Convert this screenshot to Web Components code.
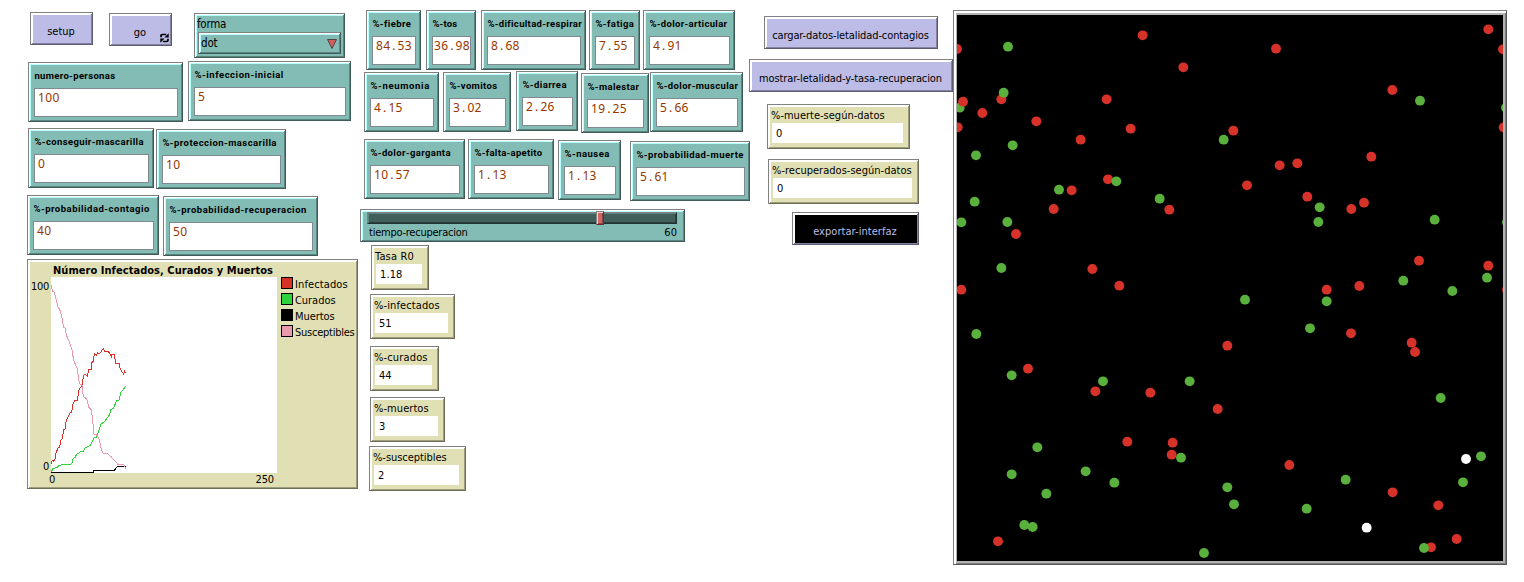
<!DOCTYPE html>
<html lang="es">
<head>
<meta charset="utf-8">
<title>Interfaz</title>
<style>
body{margin:0;background:#fff;width:1524px;height:582px;overflow:hidden}
</style>
</head>
<body>
<sim-interface></sim-interface>
<script>
const UI = '"DejaVu Sans Condensed","DejaVu Sans",sans-serif';
function define(name, render, after) {
  customElements.define(name, class extends HTMLElement {
    connectedCallback() {
      if (this.shadowRoot) return;
      const a = k => this.getAttribute(k) || '';
      const root = this.attachShadow({mode: 'open'});
      const t = document.createElement('template');
      t.innerHTML = render(a);
      root.append(t.content.cloneNode(true));
      if (after) after(this, root, a);
    }
  });
}
/* Widget box: size and the bevel shared by all widgets. */
const frame = (a, h, bg, inner, d1, d2, hl) => `
:host{display:block;flex:none;box-sizing:border-box;width:${a('w')}px;height:${h}px;margin:${a('dy') || 0}px 0 0 ${a('dx') || 0}px;
background:${bg};border:1px solid;border-color:#808080 ${d2} ${d2} #808080;
box-shadow:inset 1px 1px #fff,inset -1px -1px ${d1},inset 2px 2px ${hl};color:#000;font:11px/14px ${UI}}`;

/* Text whose letter spacing is adjusted to a given width. */
define('fit-text', () => `<style>:host{display:inline-block;white-space:pre}</style><span><slot></slot></span>`,
  (el, root, a) => {
    const s = root.querySelector('span');
    const target = parseFloat(a('w')) + 1, n = el.textContent.length;
    const natural = s.getBoundingClientRect().width;
    el.style.letterSpacing = ((target - natural) / n).toFixed(3) + 'px';
  });

define('sim-button', a => `<style>
${frame(a, 33, a('dark') ? '#000' : '#bcbce6', '', '#8383a1', '#5c5c71', '#fff')}
:host{display:flex;align-items:center;justify-content:center;position:relative;padding:7px 1px 0 0;${a('dark') ? 'color:#bcbce6' : ''}}
svg{position:absolute;right:2px;bottom:2px}
</style><fit-text w="${a('tw')}">${a('label')}</fit-text>
${a('forever') ? `<svg width="9" height="10" viewBox="0 0 9 10" fill="none" stroke="#000" stroke-width="1.7"><path d="M1 4.2V2.8Q1 1.5 2.3 1.5H6.2"/><path d="M8 5.8V7.2Q8 8.5 6.7 8.5H2.8"/><path d="M8.7 .3V4.6H4.4ZM.3 9.7V5.4H4.6Z" fill="#000" stroke="none"/></svg>` : ''}`);

define('sim-input', a => `<style>
${frame(a, 60, '#82bcb5', '', '#5b837f', '#405c59', '#baffff')}
:host{padding:7px 4px 0 5px}
.l{font:bold 9.5px/12px Roboto,sans-serif;height:12px;padding-left:.4px;white-space:nowrap}
.b{box-sizing:border-box;height:29px;margin-top:6px;border:1px solid #808890;background:#fff;color:#963700;
font:12px/16px "Noto Sans",sans-serif;padding:1px 0 0 ${a('shift') || 3}px;white-space:nowrap;overflow:hidden;letter-spacing:.34px}
.p{display:inline-block;width:7.2px;text-align:center}
</style><div class="l"><fit-text w="${a('tw')}">${a('label')}</fit-text></div>
<div class="b">${a('value').replace('.', '<span class="p">.</span>')}</div>`);

define('sim-monitor', a => `<style>
${frame(a, 45, '#e0e0b4', '', '#9d9d7e', '#6e6e58', '#fff')}
:host{padding:4px 6px 0 4px}
.l{height:14px}.l fit-text{margin-left:-1px}.b{height:20px;background:#fff;padding:4px 0 0 4px;box-sizing:border-box}
</style><div class="l"><fit-text w="${a('tw')}">${a('label')}</fit-text></div>
<div class="b"><fit-text w="${a('vw')}">${a('value')}</fit-text></div>`);

define('sim-chooser', a => `<style>
${frame(a, 45, '#82bcb5', '', '#5b837f', '#405c59', '#baffff')}
:host{padding:3px 3px 0;font:11.5px/15px ${UI}}
.l{height:15px}.l fit-text{margin-left:-1px}
.b{height:22px;box-sizing:border-box;border:1px solid;border-color:#808080 #405c59 #405c59 #808080;box-shadow:inset 1px 1px #fff,inset -1px -1px #5b837f,inset 2px 2px #baffff;
display:flex;justify-content:space-between;align-items:center;padding:0 3px 0 2px}
svg{margin-top:1px}
</style><div class="l"><fit-text w="28">${a('label')}</fit-text></div>
<div class="b"><fit-text w="15.5">${a('value')}</fit-text><svg width="10" height="10"><path d="M.5 .5H9.5L5 9.5Z" fill="#d0605c" stroke="#54413f"/></svg></div>`);

define('sim-slider', a => `<style>
${frame(a, 33, '#82bcb5', '', '#5b837f', '#405c59', '#baffff')}
:host{padding:2px 7px 0 6px;font:11px/15px ${UI}}
.t{height:12px;box-sizing:border-box;background:#41605c;border:1px solid;border-color:#808080 #203230 #203230 #808080;box-shadow:inset 1px 1px #5b837f,inset -1px -1px #2c403e;position:relative}
.k{position:absolute;left:228px;top:-2px;width:8px;height:14px;box-sizing:border-box;background:#cc6663;border:1px solid;border-color:#808080 #642f2e #642f2e #808080;box-shadow:inset 1px 1px #ffcfcc,inset -1px -1px #8e4745}
.l{display:flex;justify-content:space-between;padding:1px 0 0 2px}
</style><div class="t"><div class="k"></div></div>
<div class="l"><fit-text w="97.5">${a('label')}</fit-text><fit-text w="11.7">${a('value')}</fit-text></div>`);

const curves = {
  '#000': 'M93 652H219V646H283L292 634H318',
  '#2dd23c': 'M94 652L98 641L112 637L117 632L129 628H152L158 622V613L166 606L170 598L180 592L183 588H190L194 580L202 576L212 571L216 560L224 546H230L237 526L243 507L254 500L262 488L268 480L273 463L281 459L290 436H297L303 412L309 405L317 393',
  '#d83228': 'M93 628L97 616L100 620L105 612L108 595L114 578H118L123 556L127 550L131 525L137 520V503L144 486L150 474L155 471L160 443L166 435L172 436L178 400L187 393L190 362L195 358L202 364L206 343H215V322L220 320L223 295L229 300L233 294L240 295L250 280L255 290L263 289L268 293L275 306L276 298H283L287 324H297V334L305 349L311 357L314 349L317 355',
  '#e899ac': 'M93 91L98 109L103 112L108 133L114 156L119 163L125 184L131 218H135L139 240L147 258L156 285L161 317L171 338L178 385L186 391L190 425L200 431L206 456L214 464L218 495L222 537L232 541L239 557L244 584L250 595H262L272 604L284 617L294 628H311L317 641'
};
define('sim-plot', a => `<style>
${frame(a, 230, '#e0e0b4', '', '#9d9d7e', '#6e6e58', '#fff')}
:host{font-size:11px;padding:2px 0 0 2px}
.title{font:bold 11px/17px ${UI};height:15px;padding-left:23px}
.main{display:grid;grid-template-columns:21px 226px auto;column-gap:0}
.y{display:flex;flex-direction:column;justify-content:space-between;align-items:flex-end;padding:3px 2px 0 0;height:197px;margin-bottom:-1px;box-sizing:border-box;line-height:14px}
svg{display:block;background:#fff}
.leg{padding-left:4px}
.i{height:16px;display:flex;align-items:flex-start;gap:2px;line-height:14px}
.i i{width:10px;height:10px;border:1px solid #000;flex:none}
.i fit-text{padding-top:1px}
.x{display:flex;justify-content:space-between;padding:0 3px 0 19px;width:225px}
</style>
<div class="title"><fit-text w="219">${a('label')}</fit-text></div>
<div class="main"><div class="y"><fit-text w="17">100</fit-text><fit-text w="5">0</fit-text></div>
<svg width="226" height="196" viewBox="93 66 678 588">${Object.entries(curves).map(([c, d]) => `<path d="${d}" fill="none" stroke="${c}" stroke-width="3" shape-rendering="crispEdges"/>`).join('')}</svg>
<div class="leg">${[['#d83228', 'Infectados', 51.7], ['#2dd23c', 'Curados', 39.5], ['#000', 'Muertos', 38.5], ['#e899ac', 'Susceptibles', 58.5]].map(([c, t, w]) => `<div class="i"><i style="background:${c}"></i><fit-text w="${w}">${t}</fit-text></div>`).join('')}</div></div>
<div class="x"><fit-text w="5">0</fit-text><fit-text w="17.5">250</fit-text></div>`);

/* Agents, by quarter of the world: [dx, dy, colour, x y pairs] */
const R = '#d7322a', G = '#59b03c';
const agents = [
[0,0,G,'29 307'],
[0,0,R,'578 90 700 186 21 131 154 282 39 289 97 323 470 282 259 348 542 370 392 403 23 366 850 376 474 522 365 555 311 611 658 613 198 686 427 791 508 841 34 853'],
[0,0,G,'174 124 161 262 821 403 188 420 78 450 499 528 327 553 629 580 74 589 34 651 172 650 154 788'],
[840,0,R,'775 72 138 130 819 132 487 254 821 366 149 480 202 474 424 454 51 540 232 574 364 611 402 592 567 766 775 781 388 842 290 853 831 853'],
[840,0,G,'570 286 828 307 269 606 265 650 614 643 831 651 520 826 771 817 667 857'],
[0,840,R,'832 181 234 250 436 318 601 322 803 371 532 469 668 472 665 508 144 768'],
[0,840,G,'79 146 185 270 459 288 719 288 262 486 185 567 407 558 493 592 289 625 223 719 248 725 693 517 832 606 852 657 762 803'],
[840,840,R,'363 144 545 172 555 200 178 539 488 621 625 660 680 761 603 786'],
[840,840,G,'45 43 290 48 240 129 632 338 753 513 347 583 699 591 230 670 582 788'],
[840,840,'#fff','708 521 410 727']];
define('sim-world', () => `<style>
:host{display:block;flex:none;box-sizing:border-box;width:554px;height:555px;background:#b2b2b2;border:1px solid;border-color:#808080 #575757 #575757 #808080;box-shadow:inset 2px 2px #fff,inset -1px -1px #7d7d7d;padding:4px 0 0 3px}
svg{display:block;background:#000}
</style><svg width="546" height="546" viewBox="21 30 1638 1638">${agents.map(([dx, dy, c, p]) => `<g fill="${c}" transform="translate(${dx} ${dy + 1})">${p.match(/\d+ \d+/g).map(q => { const [x, y] = q.split(' '); return `<circle cx="${x}" cy="${y}" r="14.8"/>`; }).join('')}</g>`).join('')}</svg>`);

define('sim-row', a => `<style>:host{display:flex;align-items:flex-start;margin-top:${a('top') || 0}px}</style><slot></slot>`);
define('sim-column', a => `<style>:host{display:block;flex:none;width:${a('w')}px;padding-top:${a('top')}px}</style><slot></slot>`);

define('sim-interface', () => `<style>:host{display:flex;align-items:flex-start;padding-left:27px}</style>
<sim-column w="333" top="12">
<sim-row><sim-button w="63" dx="3" label="setup" tw="26.5"></sim-button><sim-button w="63" dx="16" dy="1" label="go" tw="11.5" forever="1"></sim-button><sim-chooser w="151" dx="22" dy="1" label="forma" value="dot"></sim-chooser></sim-row>
<sim-row top="3"><sim-input w="155" dx="1" dy="1" label="numero-personas" tw="80" value="100"></sim-input><sim-input w="163" dx="5" label="%-infeccion-inicial" tw="88.5" value="5"></sim-input></sim-row>
<sim-row top="6"><sim-input w="126" dx="1" label="%-conseguir-mascarilla" tw="108.5" value="0"></sim-input><sim-input w="130" dx="2" dy="1" label="%-proteccion-mascarilla" tw="113.5" value="10"></sim-input></sim-row>
<sim-row top="6"><sim-input w="132" label="%-probabilidad-contagio" tw="115.5" value="40"></sim-input><sim-input w="155" dx="4" dy="1" label="%-probabilidad-recuperacion" tw="136.5" value="50"></sim-input></sim-row>
<sim-row top="3"><sim-plot w="331" label="Número Infectados, Curados y Muertos"></sim-plot></sim-row>
</sim-column>
<sim-column w="389" top="10">
<sim-row><sim-input w="55" dx="6" label="%-fiebre" tw="37.7" value="84.53"></sim-input><sim-input w="50" dx="5" label="%-tos" tw="24" value="36.98" shift="1"></sim-input><sim-input w="105" dx="5" label="%-dificultad-respirar" tw="93.5" value="8.68"></sim-input><sim-input w="51" dx="3" label="%-fatiga" tw="38" value="7.55"></sim-input><sim-input w="92" dx="3" label="%-dolor-articular" tw="77" value="4.91"></sim-input></sim-row>
<sim-row top="1"><sim-input w="75" dx="4" dy="1" label="%-neumonia" tw="58.5" value="4.15"></sim-input><sim-input w="68" dx="4" dy="1" label="%-vomitos" tw="47" value="3.02"></sim-input><sim-input w="62" dx="5" label="%-diarrea" tw="43.5" value="2.26"></sim-input><sim-input w="68" dx="3" dy="2" label="%-malestar" tw="51" value="19.25"></sim-input><sim-input w="93" dx="1" dy="1" label="%-dolor-muscular" tw="81" value="5.66"></sim-input></sim-row>
<sim-row top="6"><sim-input w="101" dx="4" label="%-dolor-garganta" tw="79.5" value="10.57"></sim-input><sim-input w="86" dx="3" label="%-falta-apetito" tw="67" value="1.13"></sim-input><sim-input w="63" dx="4" dy="1" label="%-nausea" tw="44.5" value="1.13"></sim-input><sim-input w="120" dx="9" dy="2" label="%-probabilidad-muerte" tw="106.5" value="5.61"></sim-input></sim-row>
<sim-row top="8"><sim-slider w="325" label="tiempo-recuperacion" value="60"></sim-slider></sim-row>
<sim-row top="3"><sim-monitor w="58" dx="11" label="Tasa R0" tw="38" value="1.18" vw="21.5"></sim-monitor></sim-row>
<sim-row top="4"><sim-monitor w="85" dx="10" label="%-infectados" tw="64.7" value="51" vw="11.5"></sim-monitor></sim-row>
<sim-row top="7"><sim-monitor w="69" dx="10" label="%-curados" tw="52.7" value="44" vw="11.5"></sim-monitor></sim-row>
<sim-row top="6"><sim-monitor w="75" dx="10" label="%-muertos" tw="53.7" value="3" vw="5"></sim-monitor></sim-row>
<sim-row top="4"><sim-monitor w="97" dx="9" label="%-susceptibles" tw="72.7" value="2" vw="5"></sim-monitor></sim-row>
</sim-column>
<sim-column w="204" top="16">
<sim-row><sim-button w="174" dx="15" label="cargar-datos-letalidad-contagios" tw="155.7"></sim-button></sim-row>
<sim-row top="10"><sim-button w="204" label="mostrar-letalidad-y-tasa-recuperacion" tw="182"></sim-button></sim-row>
<sim-row top="12"><sim-monitor w="143" dx="18" label="%-muerte-según-datos" tw="112.7" value="0" vw="5"></sim-monitor></sim-row>
<sim-row top="10"><sim-monitor w="151" dx="19" label="%-recuperados-según-datos" tw="138.7" value="0" vw="5"></sim-monitor></sim-row>
<sim-row top="8"><sim-button w="127" dx="43" label="exportar-interfaz" tw="82.7" dark="1"></sim-button></sim-row>
</sim-column>
<sim-column w="554" top="10"><sim-world></sim-world></sim-column>`);
</script>
</body>
</html>
